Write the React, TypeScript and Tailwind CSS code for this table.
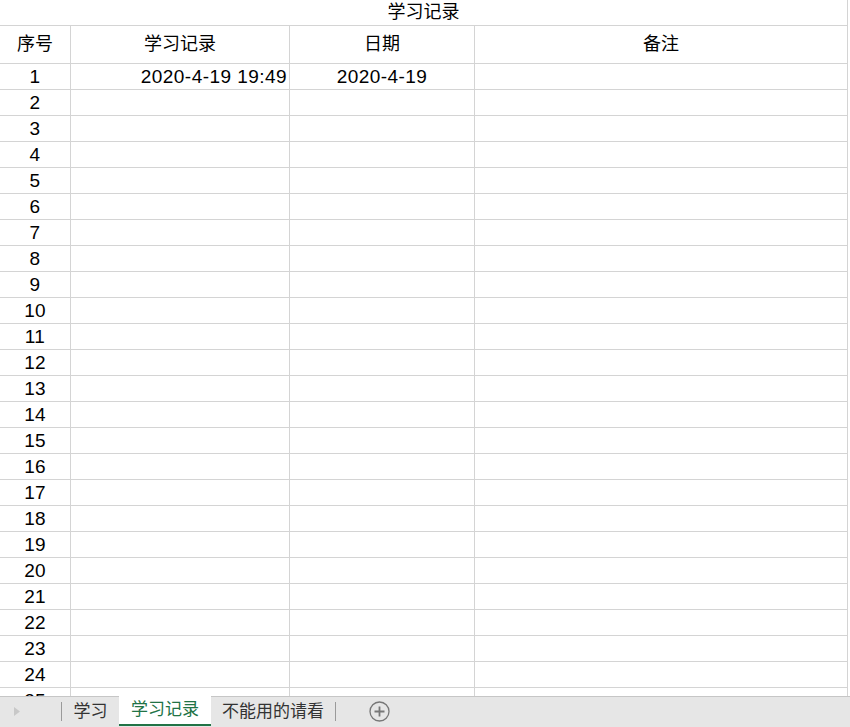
const rows = Array.from({ length: 25 }, (_, i) => i + 1)

const font = { fontFamily: '"Liberation Sans", "Noto Sans CJK SC", sans-serif' }

function Cell({ children, className = '' }: { children?: React.ReactNode; className?: string }) {
  return (
    <div className={`flex items-center border-r border-b border-[#d4d4d4] text-[18px] text-black ${className}`}>
      {children}
    </div>
  )
}

export default function App() {
  return (
    <div className="w-[850px] h-[727px] bg-white flex flex-col overflow-hidden" style={font}>
      <div className="h-[696px] overflow-hidden">
        <div className="w-[848px] h-[26px] flex items-center justify-center border-r border-b border-[#d4d4d4] text-[18px] text-black">
          学习记录
        </div>
        <div className="grid grid-cols-[71px_219px_185px_373px]">
          <Cell className="h-[38px] justify-center">序号</Cell>
          <Cell className="h-[38px] justify-center">学习记录</Cell>
          <Cell className="h-[38px] justify-center">日期</Cell>
          <Cell className="h-[38px] justify-center">备注</Cell>
          {rows.map((n) => (
            <div key={n} className="contents">
              <Cell className="h-[26px] pt-[2px] justify-center text-[19px] tracking-[0.3px]">{n}</Cell>
              <Cell className="h-[26px] pt-[2px] justify-end pr-[2px] text-[19px] tracking-[0.45px]">
                {n === 1 ? '2020-4-19 19:49' : ''}
              </Cell>
              <Cell className="h-[26px] pt-[2px] justify-center text-[19px] tracking-[0.45px]">
                {n === 1 ? '2020-4-19' : ''}
              </Cell>
              <Cell className="h-[26px]" />
            </div>
          ))}
        </div>
      </div>

      <div className="h-[31px] flex border-t border-[#c6c6c6] bg-[#e6e6e6] text-[17px]">
        <div className="flex h-[29px] items-stretch">
          <div className="w-[61px] flex items-center pl-[14px]">
            <svg width="6" height="9" viewBox="0 0 6 9">
              <path d="M0 0 L6 4.5 L0 9 Z" fill="#c8c8c8" />
            </svg>
          </div>
          <div className="my-[5px] w-px bg-[#9a9a9a]" />
          <div className="w-[57px] flex items-center justify-center text-[#333]">学习</div>
          <div className="w-[92px] -mt-px bg-white flex items-center justify-center text-[#217346] border-b-2 border-[#217346]">
            学习记录
          </div>
          <div className="w-[124px] flex items-center justify-center text-[#333]">不能用的请看</div>
          <div className="my-[5px] w-px bg-[#9a9a9a]" />
          <div className="w-[86px] flex items-center justify-center">
            <svg width="21" height="21" viewBox="0 0 21 21">
              <circle cx="10.5" cy="10.5" r="9.5" fill="none" stroke="#777" strokeWidth="1.3" />
              <path d="M10.5 5.5 V15.5 M5.5 10.5 H15.5" stroke="#777" strokeWidth="1.8" />
            </svg>
          </div>
        </div>
      </div>
    </div>
  )
}
